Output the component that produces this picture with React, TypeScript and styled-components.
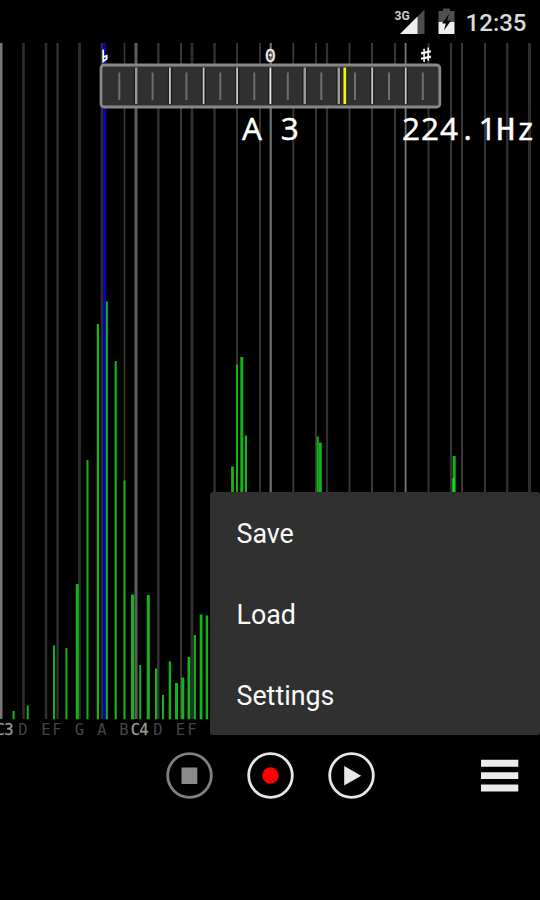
import React from "react";
import styled, { createGlobalStyle } from "styled-components";

const GlobalStyle = createGlobalStyle`
  body { margin: 0; background: #000; }
  * { box-sizing: border-box; }
`;

const Screen = styled.div`
  position: relative;
  display: flex;
  flex-direction: column;
  width: 540px;
  height: 900px;
  overflow: hidden;
  background: #000;
  font-family: Roboto, sans-serif;
`;

const StatusBar = styled.header`
  display: flex;
  justify-content: flex-end;
  align-items: center;
  height: 43px;
  padding: 2px 13.5px 0 0;
`;

const StatusIcons = styled.svg`
  display: block;
  margin: -2px 9px 0 0;
`;

const Clock = styled.span`
  color: #dadada;
  font-size: 24px;
  font-weight: 500;
  line-height: 28px;
`;

const Plot = styled.svg`
  display: block;
  flex: none;
`;

const Toolbar = styled.footer`
  display: flex;
  align-items: center;
  height: 85px;
  padding: 0 19px 0 165px;
`;

const ToolButton = styled.button<{ $push?: boolean }>`
  display: flex;
  align-items: center;
  justify-content: center;
  width: ${(p) => (p.$push ? 43 : 49)}px;
  height: 49px;
  margin-right: ${(p) => (p.$push ? 0 : 32)}px;
  margin-left: ${(p) => (p.$push ? "auto" : 0)};
  padding: 0;
  border: 0;
  background: none;
`;

const Menu = styled.nav`
  position: absolute;
  left: 210px;
  top: 492px;
  display: flex;
  flex-direction: column;
  width: 330px;
  height: 243px;
  border-radius: 3px;
  background: #303030;
`;

const MenuItem = styled.div`
  display: flex;
  flex: 1;
  align-items: center;
  padding: 3px 26.5px 0;
  color: #fafafa;
  font-size: 26.8px;
  line-height: 32px;
`;

const MONO = "'DejaVu Sans Mono', monospace";
const SANS = "'Open Sans', 'Noto Sans', sans-serif";

// [centre, width, colour]
const gridLines: [number, number, string][] = [
  [1, 3, "#777"], [23.5, 2.6, "#2e2e2e"], [46, 2.6, "#2e2e2e"], [57.5, 2, "#393939"],
  [79.5, 2.8, "#2e2e2e"], [102, 2.6, "#2c2c2c"], [124.5, 1.6, "#383838"], [136, 3, "#5e5e5e"],
  [158.3, 2.6, "#303030"], [181, 2, "#373737"], [192, 2.8, "#2e2e2e"], [214.5, 2.6, "#2e2e2e"],
  [237, 1.8, "#393939"], [260, 1.8, "#393939"], [270.7, 2.2, "#707070"], [293.3, 1.8, "#393939"],
  [316, 2, "#343434"], [327, 2.4, "#303030"], [349.5, 1.8, "#393939"], [372, 2, "#373737"],
  [395, 2.2, "#323232"], [405.6, 1.8, "#777"], [428.5, 2, "#333"], [451, 2.2, "#333"],
  [462, 2, "#383838"], [485, 2, "#363636"], [507.2, 2.5, "#303030"], [529.5, 3, "#2d2d2d"],
];

// [centre, top, width]
const peaks: [number, number, number][] = [
  [13.6, 711, 2], [27.7, 705.5, 2], [54, 645.5, 2], [66.4, 648, 2], [77.3, 584, 3],
  [87.5, 460, 2], [97.9, 324, 2.2], [106.9, 301.5, 2], [115.7, 361, 2.2], [124.5, 480.5, 2],
  [132.6, 594.5, 3.2], [140.2, 665, 2], [148.3, 595, 3], [156.1, 668.5, 2.2], [163, 695, 2],
  [169.9, 661.5, 2.4], [176.5, 683, 3], [182.8, 677.5, 3], [188.9, 657, 2.8], [194.8, 635, 2.2],
  [201.1, 614.5, 2.8], [206.9, 615.5, 2.4], [232.5, 466.5, 2.8], [237, 364.5, 2],
  [241.8, 357, 3], [245.9, 435.5, 2.2], [317.7, 436.5, 2], [320.2, 442.5, 3.2], [454.2, 456, 3],
];

const notes: [number, string, boolean?][] = [
  [4.5, "C3", true], [23, "D"], [46, "E"], [57, "F"], [79.5, "G"], [102, "A"],
  [124, "B"], [139.7, "C4", true], [158, "D"], [180.5, "E"], [192, "F"],
];

const majorTicks = [136, 170, 203.7, 237.2, 270.5, 304.5, 338.5, 372.3, 405.8];
const minorTicks = [119.3, 152.6, 186.4, 220.3, 254.3, 287.8, 321.3, 355, 389, 422.8];

function Spectrum() {
  return (
    <Plot width="540" height="690" viewBox="0 43 540 690" overflow="visible">
      {gridLines.map(([x, w, c]) => (
        <rect key={x} x={x - w / 2} y="43" width={w} height="676" fill={c} />
      ))}
      <rect x="103.2" y="43" width="3" height="676" fill="#0505b5" />
      {peaks.map(([x, y, w]) => (
        <rect key={x} x={x - w / 2} y={y} width={w} height={719.3 - y} fill="#13b31b" />
      ))}
      <rect x="452.4" y="478" width="2" height="20" fill="#16e51c" />

      <g fontFamily={MONO} fontSize="15.5" textAnchor="middle">
        {notes.map(([x, name, strong]) => (
          <text key={x} x={x} y="735" fill={strong ? "#999" : "#454545"}
            stroke={strong ? "#999" : "none"} strokeWidth=".3"
            textLength={strong ? 18 : undefined}>{name}</text>
        ))}
      </g>

      <rect x="101" y="65" width="338.8" height="42" rx="3" fill="#303030" stroke="#888" strokeWidth="2.8" />
      {majorTicks.map((x, i) => (
        <g key={x}>
          <rect x={x - 2.2} y="67.5" width="4.4" height="36.5" fill="#1b1b1b" />
          <rect x={x - 1} y="67.5" width={i === 5 || i === 0 || i === 6 ? 2.5 : 1.8} height="36.5"
            fill={i === 4 ? "#eee" : i === 5 || i === 0 || i === 6 ? "#999" : "#c8c8c8"} />
        </g>
      ))}
      {minorTicks.map((x) => (
        <rect key={x} x={x - 1} y="72.5" width="2" height="27.5" fill="#6e6e6e" />
      ))}
      <rect x="342.8" y="67.5" width="4.2" height="36.5" fill="#1b1b00" />
      <rect x="343.4" y="67.5" width="2.8" height="36.5" fill="#f4f414" />

      <g fill="none" stroke="#f5f5f5">
        <path d="M103.2 49.5V61.5L106.7 58.8V55.8L103.2 57.2" strokeWidth="1.8" />
        <path d="M424.1 48.8V62M428.2 47.5V60.8" strokeWidth="1.6" />
        <path d="M421 53.4L431 51.2M421 58.8L431 56.6" strokeWidth="2.2" />
      </g>
      <text x="270.3" y="61.5" fill="#eee" stroke="#eee" strokeWidth=".3" fontFamily={MONO}
        fontSize="18.5" textAnchor="middle">0</text>

      <g fill="#fff" stroke="#fff" strokeWidth=".45" fontFamily={SANS} fontSize="31.5">
        <text y="140" x="242 261 280.7">A 3</text>
        <text y="140" x="402 421 440 463.6 478.5 496.3 518.3">
          224.1<tspan fontFamily={MONO} fontSize="31">H</tspan>z
        </text>
      </g>
    </Plot>
  );
}

const Ring = ({ color, children }: { color: string; children: React.ReactNode }) => (
  <svg width="49" height="49" viewBox="0 0 49 49">
    <circle cx="24.5" cy="24.5" r="21.8" fill="none" stroke={color} strokeWidth="2.8" />
    {children}
  </svg>
);

export default function App() {
  return (
    <Screen>
      <GlobalStyle />
      <StatusBar>
        <StatusIcons width="64" height="30" viewBox="392.5 7 64 30">
          <text x="394" y="20.2" fill="#ccc" fontFamily="Roboto, sans-serif" fontWeight="700"
            fontSize="13" textLength="15.2" lengthAdjust="spacingAndGlyphs">3G</text>
          <path d="M399.5 34L424 9.5V34Z" fill="#4c4c4c" />
          <path d="M399.5 34L417 16.5V34Z" fill="#eee" />
          <path d="M438 11H442.5V8.5H449.5V11H454V22H438Z" fill="#505050" />
          <path d="M438 22H454V34H438Z" fill="#eee" />
          <path d="M448.5 14L441.5 23.5H445.3L443.5 30.5L450.5 20.5H446.7Z" fill="#050505" />
        </StatusIcons>
        <Clock>12:35</Clock>
      </StatusBar>

      <Spectrum />

      <Toolbar>
        <ToolButton aria-label="Stop">
          <Ring color="#808080"><rect x="16.5" y="16.5" width="15.8" height="16.5" fill="#8b8b8b" /></Ring>
        </ToolButton>
        <ToolButton aria-label="Record">
          <Ring color="#e6e6e6"><circle cx="24.5" cy="24.5" r="8.2" fill="#f00" /></Ring>
        </ToolButton>
        <ToolButton aria-label="Play">
          <Ring color="#e6e6e6"><path d="M17.2 15V34.5L34.2 24.7Z" fill="#e8e8e8" /></Ring>
        </ToolButton>
        <ToolButton $push aria-label="Menu">
          <svg width="43" height="49" viewBox="478 751 43 49">
            <path d="M481 759.8H518.3V766.7H481ZM481 772.2H518.3V779.1H481ZM481 784.5H518.3V791.4H481Z" fill="#ebebeb" />
          </svg>
        </ToolButton>
      </Toolbar>

      <Menu>
        <MenuItem>Save</MenuItem>
        <MenuItem>Load</MenuItem>
        <MenuItem>Settings</MenuItem>
      </Menu>
    </Screen>
  );
}
